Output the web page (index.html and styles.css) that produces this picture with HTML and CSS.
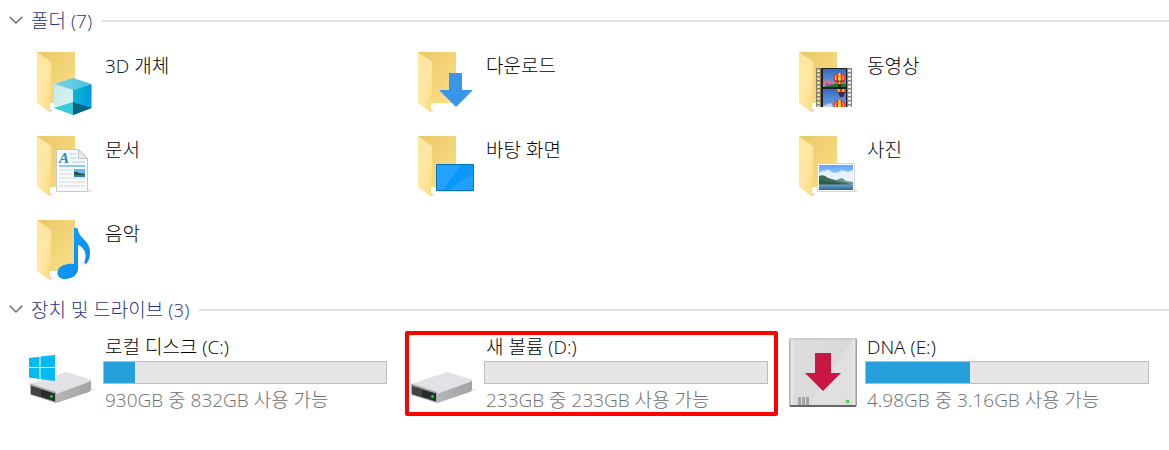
FILE: index.html
```html
<!DOCTYPE html>
<html lang="ko">
<head>
<meta charset="utf-8">
<title>내 PC</title>
<link rel="stylesheet" href="styles.css">
</head>
<body>
<svg class="defs" aria-hidden="true">
  <defs>
    <linearGradient id="back" x1="0" y1="0" x2="1" y2="1"><stop offset="0" stop-color="#e9c765"/><stop offset="1" stop-color="#fce08a"/></linearGradient>
    <linearGradient id="front" x1="0" y1="0" x2="1" y2="1"><stop offset="0" stop-color="#ffe69b"/><stop offset=".5" stop-color="#ffe8a6"/><stop offset="1" stop-color="#fbd977"/></linearGradient>
    <linearGradient id="top" x1="0" y1="0" x2="1" y2="0"><stop offset="0" stop-color="#78d5ea"/><stop offset="1" stop-color="#48bfe0"/></linearGradient>
    <linearGradient id="right" x1="0" y1="0" x2="1" y2="0"><stop offset="0" stop-color="#06b8d4"/><stop offset="1" stop-color="#0098dc"/></linearGradient>
    <linearGradient id="left" x1="0" y1="0" x2="1" y2="1"><stop offset="0" stop-color="#c2ebec"/><stop offset="1" stop-color="#e0f6f8"/></linearGradient>
    <linearGradient id="side" x1="0" y1="0" x2="1" y2="0"><stop offset="0" stop-color="#b5b6b8"/><stop offset="1" stop-color="#a2a3a5"/></linearGradient>
    <linearGradient id="sky" x1="0" y1="0" x2="0" y2="1"><stop offset="0" stop-color="#5aa4ff"/><stop offset="1" stop-color="#dceeff"/></linearGradient>
    <linearGradient id="sea" x1="0" y1="0" x2="0" y2="1"><stop offset="0" stop-color="#6ea6c8"/><stop offset="1" stop-color="#286298"/></linearGradient>
    <linearGradient id="filmsky" x1="0" y1="0" x2="0" y2="1"><stop offset="0" stop-color="#3569c4"/><stop offset="1" stop-color="#6fa4e5"/></linearGradient>
    <linearGradient id="case" x1="0" y1="0" x2="1" y2="0"><stop offset="0" stop-color="#a9a9a9"/><stop offset=".04" stop-color="#e9e9e9"/><stop offset=".08" stop-color="#dcdcdc"/><stop offset=".92" stop-color="#d9d9d9"/><stop offset=".96" stop-color="#ededed"/><stop offset="1" stop-color="#8f8f8f"/></linearGradient>
    <linearGradient id="note" x1="0" y1="0" x2="1" y2="1"><stop offset="0" stop-color="#16a4ff"/><stop offset="1" stop-color="#0788ec"/></linearGradient>
    <linearGradient id="shadow" x1="0" y1="0" x2="1" y2="0"><stop offset="0" stop-color="#d4d4d4"/><stop offset="1" stop-color="#fff"/></linearGradient>
    <symbol id="folder" viewBox="0 0 72 72">
      <path d="M26 63L31 64L26 66z" fill="url(#shadow)"/>
      <path d="M13 6H51V57H26L14 50z" fill="url(#back)"/>
      <path d="M13 6L27.500 16V49L26 51V66.500L13 57z" fill="url(#front)"/>
      <path d="M13 6L27.500 16V49L26 51" fill="none" stroke="#f1d17a" stroke-width=".6"/>
    </symbol>
    <symbol id="drive" viewBox="0 0 72 72">
      <path d="M45 61L72 54L67 52z" fill="#ececec"/>
      <path d="M32 57L67 44V53Q67 55 65 56L34 66.500Q33 67 32 66.500z" fill="url(#side)"/>
      <path d="M6 48L42 36L67 43.500Q67 45 65 46L32 58z" fill="#e1e2e5"/>
      <path d="M6 47.500L32 56V67L7 59Q6 58 6 56z" fill="#a7a8aa"/>
      <path d="M7 50L31 57.500V65.500L7 58z" fill="#2b2b2b"/>
      <path d="M7 50L17 53V61L7 58z" fill="#444"/>
      <circle cx="27.5" cy="60.500" r="2" fill="#187b20"/><circle cx="27.5" cy="60.500" r="1.1" fill="#27ed35"/>
    </symbol>
    <symbol id="balloon" viewBox="0 0 14 15" overflow="visible">
      <path d="M7 0C12 0 14 4 13 7C12 10 9 12 8.500 13H5.500C5 12 2 10 1 7C0 4 2 0 7 0z" fill="#e8242c"/>
      <path d="M4.500 1Q2 5 5.500 12L3 9Q0 5 4.500 1zM6 0Q5 6 6.300 12H7.700Q9 6 8 0zM9.500 1Q12 5 8.500 12L11 9Q14 5 9.500 1z" fill="#ffdc27"/>
      <path d="M1 7Q7 9 13 7L12 9Q7 11 2 9z" fill="#49213d" opacity=".6"/>
      <path d="M5.500 12H8.500V15H5.500z" fill="#302621"/>
    </symbol>
    <symbol id="chevron" viewBox="0 0 14 8"><path d="M.7 .7L7 7L13.300 .7" fill="none" stroke="#666" stroke-width="1.300"/></symbol>
  </defs>
</svg>

<main class="explorer">
  <section class="group">
    <h2 class="group-title"><button class="toggle" type="button"><svg class="chevron" aria-hidden="true"><use href="#chevron"/></svg><span>폴더 (7)</span></button></h2>
    <ul class="tiles">
      <li class="tile">
        <svg class="icon" viewBox="0 0 72 72" aria-hidden="true"><use href="#folder"/>
          <path d="M49 68L71 61L66 60z" fill="#eee"/>
          <path d="M49 32L67.500 38L49 44L30 38z" fill="url(#top)"/>
          <path d="M30 38L49 44V69L30 62z" fill="url(#left)"/>
          <path d="M49 44L67.500 38V62L49 69z" fill="url(#right)"/>
          <path d="M30 62L49 56V69z" fill="#38cbdc"/><path d="M49 56L67.500 62L49 69z" fill="#006782"/>
        </svg><span class="name">3D 개체</span></li>
      <li class="tile">
        <svg class="icon" viewBox="0 0 72 72" aria-hidden="true"><use href="#folder"/>
          <path d="M44 27H57V44H68L51 61L34 44H44z" fill="#3995e8"/>
        </svg><span class="name">다운로드</span></li>
      <li class="tile">
        <svg class="icon" viewBox="0 0 72 72" aria-hidden="true"><use href="#folder"/>
          <path d="M30 22H36V61H30zM60 22H66V61H60z" fill="#666" opacity=".8"/><path d="M35 22H61V61H35z" fill="#202020"/>
          <path d="M32.500 23.500V61" stroke="#ffe9a8" stroke-width="2.500" stroke-dasharray="2.500 1.500"/>
          <path d="M63.500 23.500V61" stroke="#fff" stroke-width="2.500" stroke-dasharray="2.500 1.500"/>
          <svg x="37" y="23" width="23" height="18"><path d="M0 0H23V18H0z" fill="url(#filmsky)"/><path d="M0 17L1 11L3 14L5 9L7 14L9 12L12 17z" fill="#f07868"/><path d="M2 17L4 12L6 16L8 14L11 18z" fill="#a54fc8"/><path d="M8 16L14 14L23 15V18H0z" fill="#26732e"/><use href="#balloon" x="10" y="4" width="13" height="14"/></svg>
          <svg x="37" y="43" width="23" height="18"><path d="M0 0H23V18H0z" fill="url(#filmsky)"/><path d="M13 0H23L21 5H15z" fill="#e32734"/><path d="M14 0H16L18 5L20 0H22L19 6H17z" fill="#ffd428"/><path d="M15 3H22L20 8H17z" fill="#41253a"/><use href="#balloon" x="10" y="11" width="13" height="14"/><path d="M0 17L8 14L10 18H0z" fill="#c5d5ee"/></svg>
        </svg><span class="name">동영상</span></li>
      <li class="tile">
        <svg class="icon" viewBox="0 0 72 72" aria-hidden="true"><use href="#folder"/>
          <path d="M60 62H69L64 58z" fill="#e8e8e8"/>
          <path d="M32.500 19.500H54L63.500 29V61.500H32.500z" fill="#f9fafb" stroke="#c6c8ca"/>
          <path d="M54.500 19.500V28.500H63.500z" fill="#e7e9ea" stroke="#c0c2c4"/>
          <path d="M46 24H53M46 28H53M48 32H61" stroke="#a9cfe8"/><path d="M35 36H61" stroke="#67b7e5" stroke-width="1.500"/>
          <path d="M35 40H48M35 44H48M35 48H61M35 52H61M35 56H61" stroke="#d4d7da"/>
          <text class="letter" x="35" y="33">A</text>
          <path d="M50 39H61V47H50z" fill="#62b9ed"/><path d="M50 42Q53 41 55 43L61 44V47H50z" fill="#245450"/><path d="M50 45H61V47H50z" fill="#347eae"/>
        </svg><span class="name">문서</span></li>
      <li class="tile">
        <svg class="icon" viewBox="0 0 72 72" aria-hidden="true"><use href="#folder"/>
          <path d="M34 62H69L66 60H32z" fill="#dedede"/>
          <path d="M31.500 34.500H68.500V60.500H31.500z" fill="#0a97fc" stroke="#0571bd"/><path d="M32 35H56L38 60H32z" fill="#23a1fc"/><path d="M44 60L68 43V60z" fill="#35aafc" opacity=".5"/>
        </svg><span class="name">바탕 화면</span></li>
      <li class="tile">
        <svg class="icon" viewBox="0 0 72 72" aria-hidden="true"><use href="#folder"/>
          <path d="M65 62H72L68 58z" fill="#e4e4e4"/>
          <path d="M31.500 33.500H68.500V61.500H31.500z" fill="#fff" stroke="#d4d4d4"/>
          <path d="M33 35H67V54H33z" fill="url(#sky)"/>
          <path d="M33 44Q35 40 39 41Q43 38 45 42L49 43L53 42Q55 39 59 41L62 42L67 40V54H33z" fill="#f2f8ff" opacity=".85"/>
          <path d="M42 48L50 50L56 48L60 51L67 52V55H42z" fill="#6e8f8c"/><path d="M33 46Q38 44 42 48L50 51L60 53L66 55H33z" fill="#3c6b58"/>
          <path d="M33 50L42 52L52 53L58 55H33z" fill="#285c43"/>
          <path d="M33 54.500H67V60H33z" fill="url(#sea)"/>
        </svg><span class="name">사진</span></li>
      <li class="tile">
        <svg class="icon" viewBox="0 0 72 72" aria-hidden="true"><use href="#folder"/>
          <path d="M50 14Q52 13 54 15C54 24 67 27 66 39Q66 46 62 50L60 49C64 40 60 33 54 31V54C54 61 48 65 41 65C35 65 32 61 34 56C36 51 44 49 50 50z" fill="url(#note)"/>
        </svg><span class="name">음악</span></li>
    </ul>
  </section>

  <section class="group">
    <h2 class="group-title"><button class="toggle" type="button"><svg class="chevron" aria-hidden="true"><use href="#chevron"/></svg><span>장치 및 드라이브 (3)</span></button></h2>
    <ul class="tiles drives">
      <li class="tile">
        <svg class="icon" viewBox="0 0 72 72" aria-hidden="true"><use href="#drive"/>
          <path d="M5 22L15.500 20.700V31H5zM16.500 20.500L31 19V31H16.500zM5 32H15.500V43L5 41.500zM16.500 32H31V45L16.500 43.200z" fill="#04b9f4"/>
        </svg>
        <div class="details"><label class="name" for="c">로컬 디스크 (C:)</label><progress class="usage" id="c" value="11" max="100"></progress><span class="space">930GB 중 832GB 사용 가능</span></div></li>
      <li class="tile highlighted">
        <svg class="icon" viewBox="0 0 72 72" aria-hidden="true"><use href="#drive"/></svg>
        <div class="details"><label class="name" for="d">새 볼륨 (D:)</label><progress class="usage" id="d" value="0" max="100"></progress><span class="space">233GB 중 233GB 사용 가능</span></div></li>
      <li class="tile">
        <svg class="icon" viewBox="0 0 72 72" aria-hidden="true">
          <rect x="3" y="2" width="68" height="69" rx="2" fill="url(#case)"/><path d="M4 3H70" stroke="#c1c1c1"/><path d="M4 70H70" stroke="#686868" stroke-width="2"/>
          <path d="M66 4V68L24 68z" fill="#fff" opacity=".18"/>
          <path d="M29 17H45V37H55L37 55L19 37H29z" fill="#ca1642"/>
          <path d="M12 61H15V69H12zM16 61H19V69H16zM20 61H23V69H20z" fill="#a4a4a4"/>
          <circle cx="61.500" cy="65.500" r="1.800" fill="#35c643"/><circle cx="61.500" cy="65.500" r=".6" fill="#c5ffd0"/>
        </svg>
        <div class="details"><label class="name" for="e">DNA (E:)</label><progress class="usage" id="e" value="37" max="100"></progress><span class="space">4.98GB 중 3.16GB 사용 가능</span></div></li>
    </ul>
  </section>
</main>
</body>
</html>
```
FILE: styles.css
```css
* { box-sizing: border-box; }
body {
  margin: 0;
  background: #fff;
  color: #000;
  font-family: "Open Sans", "Noto Sans CJK KR", sans-serif;
  font-size: 19px;
  font-weight: 300;
  line-height: 24px;
}
.defs { position: absolute; width: 0; height: 0; }
.explorer { padding-top: 9px; }
.group-title {
  display: flex;
  align-items: center;
  gap: 10px;
  margin: 0;
  font-size: 19px;
  font-weight: 300;
}
.group-title::after { content: ""; flex: 1; height: 2px; background: #e3e3e3; }
.toggle {
  display: flex;
  align-items: center;
  gap: 8px;
  padding: 0 0 0 9px;
  border: 0;
  background: none;
  color: #1e3287;
  font: inherit;
}
.chevron { width: 14px; height: 8px; margin-bottom: 2px; }
.tiles {
  display: grid;
  grid-template-columns: repeat(auto-fill, 381px);
  grid-auto-rows: 84px;
  margin: 0;
  padding: 13px 0 0 24px;
  list-style: none;
}
.drives { padding-top: 14px; }
.tile { position: relative; display: flex; align-items: flex-start; gap: 7px; }
.icon { flex: none; width: 72px; height: 72px; overflow: visible; }
.name { padding: 8px 2px 0; }
.details { display: flex; flex-direction: column; width: 284px; }
.details .name { padding: 0 2px 3px; line-height: 22px; }
.usage {
  appearance: none;
  width: 100%;
  height: 23px;
  border: 1px solid #bcbcbc;
  background: #e6e6e6;
}
.usage::-webkit-progress-bar { background: #e6e6e6; }
.usage::-webkit-progress-value { background: #26a0da; }
.space { padding: 4px 2px 0; color: #6d6d6d; }
.letter { fill: #218dcc; font: italic 700 15px "Liberation Serif", serif; }
.highlighted::after {
  content: "";
  position: absolute;
  inset: -5px 8px 4px 0;
  border: 4px solid #f00;
  border-radius: 2px;
}
```
